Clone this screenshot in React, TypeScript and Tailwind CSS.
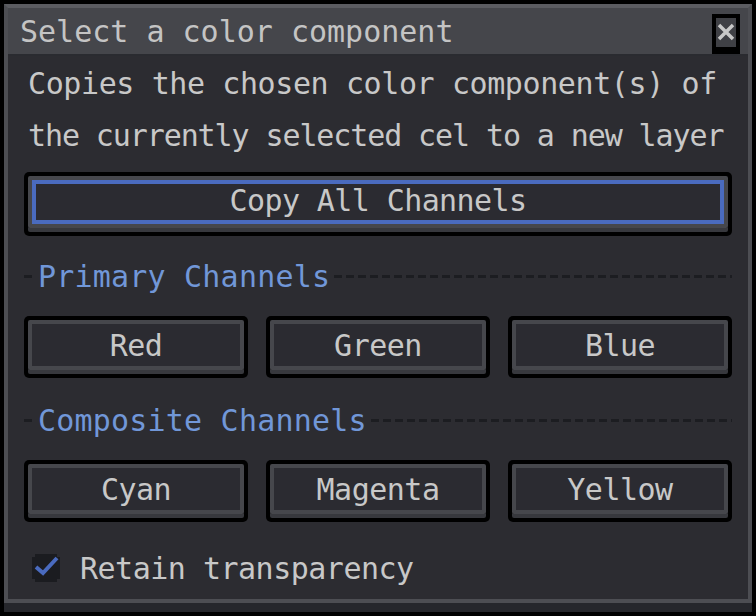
const FONT = "font-['DejaVu_Sans_Mono',monospace]";

function PixelButton({ label, focused = false }: { label: string; focused?: boolean }) {
  return (
    <button className="rounded-[5px] bg-black p-[4px] pb-[8px]">
      <div className="rounded-[2px] border-4 border-[#46474c] shadow-[0_4px_0_#37383d]">
        {focused ? (
          <div className="flex h-[44px] items-center justify-center border-4 border-[#4a6bbf] bg-[#2b2b31] pb-[3px] text-[30px] tracking-[-0.6px] text-[#c8c8c8]">
            {label}
          </div>
        ) : (
          <div className="flex h-[42px] items-center justify-center bg-[#2b2b31] text-[30px] tracking-[-0.5px] text-[#c8c8c8]">
            {label}
          </div>
        )}
      </div>
    </button>
  );
}

function SectionTitle({ text }: { text: string }) {
  const dash =
    "h-[3px] bg-[repeating-linear-gradient(90deg,#1c1d21_0_8px,transparent_8px_12px)]";
  return (
    <div className="flex h-[40px] items-center">
      <div className={`w-[10px] ${dash}`} />
      <span className="px-[4px] text-[30px] tracking-[0.2px] text-[#7197d8]">{text}</span>
      <div className={`flex-1 ${dash}`} />
    </div>
  );
}

export default function App() {
  return (
    <div className={`h-[616px] w-[756px] bg-black p-[4px] pb-0 ${FONT}`}>
      <div className="flex h-[599px] flex-col border-x-4 border-t-4 border-b-4 border-[#4d4e53] border-t-[#5b5c61]">
        {/* title bar */}
        <div className="flex h-[48px] items-center justify-between border-b-2 border-[#2a2b30] bg-[#45464b] pl-[12px] pr-[8px]">
          <span className="text-[30px] tracking-[0px] text-[#c4c4c4]">Select a color component</span>
          <div className="mt-[6px] bg-black p-[4px] pb-[7px]">
            <div className="flex h-[29px] w-[20px] items-start justify-center bg-[#3f4045] pt-[4px]">
              <svg width="20" height="20" viewBox="0 0 20 20">
                <path stroke="#c8c8c8" strokeWidth="3.5" fill="none" d="M3 3L17 17M17 3L3 17" />
              </svg>
            </div>
          </div>
        </div>

        {/* content */}
        <div className="flex flex-1 flex-col bg-[#2c2c31] px-[16px] pt-[2px]">
          <div className="whitespace-nowrap px-[4px] text-[30px] leading-[52px] text-[#c8c8c8]">
            <div className="tracking-[-0.4px]">Copies the chosen color component(s) of</div>
            <div className="tracking-[-1.1px]">the currently selected cel to a new layer</div>
          </div>

          <div className="mt-[10px] grid">
            <PixelButton label="Copy All Channels" focused />
          </div>

          <div className="mt-[20px]">
            <SectionTitle text="Primary Channels" />
          </div>
          <div className="mt-[20px] grid grid-cols-3 gap-[18px]">
            <PixelButton label="Red" />
            <PixelButton label="Green" />
            <PixelButton label="Blue" />
          </div>

          <div className="mt-[22px]">
            <SectionTitle text="Composite Channels" />
          </div>
          <div className="mt-[20px] grid grid-cols-3 gap-[18px]">
            <PixelButton label="Cyan" />
            <PixelButton label="Magenta" />
            <PixelButton label="Yellow" />
          </div>

          <div className="mt-[26px] flex h-[40px] items-center gap-[20px] pl-[8px]">
            <svg width="28" height="28" viewBox="0 0 28 28" shapeRendering="crispEdges">
              <path fill="#1b1c20" d="M3 0h22v3h3v22h-3v3h-22v-3h-3v-22h3z" />
              <path fill="none" stroke="#4a6bbf" strokeWidth="4" d="M4 13l7 6l14-15" shapeRendering="auto" />
            </svg>
            <span className="text-[30px] tracking-[-0.5px] text-[#c8c8c8]">Retain transparency</span>
          </div>
        </div>
      </div>
      <div className="h-[9px] bg-[#26272c]" />
    </div>
  );
}
